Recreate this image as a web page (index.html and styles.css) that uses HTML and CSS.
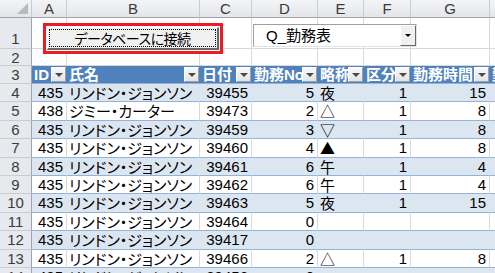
FILE: index.html
```html
<!DOCTYPE html>
<html lang="ja">
<head>
  <meta charset="UTF-8" />
  <title>勤務表 - Excel</title>
  <link rel="stylesheet" href="styles.css">
</head>
<body>
  <div class="sheet">
    <div class="row colhead">
      <div class="corner"><span class="corner-tri"></span></div>
      <div class="ch">A</div>
      <div class="ch">B</div>
      <div class="ch">C</div>
      <div class="ch">D</div>
      <div class="ch">E</div>
      <div class="ch">F</div>
      <div class="ch">G</div>
      <div class="ch"></div>
    </div>

    <div class="row r1">
      <div class="rh">1</div>
      <div class="c"></div><div class="c"></div><div class="c"></div><div class="c"></div>
      <div class="c"></div><div class="c"></div><div class="c"></div><div class="c"></div>
    </div>

    <div class="row r2">
      <div class="rh">2</div>
      <div class="c"></div><div class="c"></div><div class="c"></div><div class="c"></div>
      <div class="c"></div><div class="c"></div><div class="c"></div><div class="c"></div>
    </div>

    <div class="row r3">
      <div class="rh">3</div>
      <div class="th"><span class="th-text">ID</span><span class="filter"></span></div>
      <div class="th"><span class="th-text">氏名</span><span class="filter"></span></div>
      <div class="th"><span class="th-text">日付</span><span class="filter"></span></div>
      <div class="th"><span class="th-text">勤務No</span><span class="filter"></span></div>
      <div class="th"><span class="th-text">略称</span><span class="filter"></span></div>
      <div class="th"><span class="th-text">区分</span><span class="filter"></span></div>
      <div class="th"><span class="th-text">勤務時間</span><span class="filter"></span></div>
      <div class="th"><span class="th-text">勤務</span></div>
    </div>

    <div class="row data band">
      <div class="rh">4</div>
      <div class="c num">435</div><div class="c txt">リンドン・ジョンソン</div><div class="c num">39455</div>
      <div class="c num">5</div><div class="c txt">夜</div><div class="c num">1</div><div class="c num">15</div><div class="c"></div>
    </div>
    <div class="row data">
      <div class="rh">5</div>
      <div class="c num">438</div><div class="c txt">ジミー・カーター</div><div class="c num">39473</div>
      <div class="c num">2</div><div class="c txt">△</div><div class="c num">1</div><div class="c num">8</div><div class="c"></div>
    </div>
    <div class="row data band">
      <div class="rh">6</div>
      <div class="c num">435</div><div class="c txt">リンドン・ジョンソン</div><div class="c num">39459</div>
      <div class="c num">3</div><div class="c txt">▽</div><div class="c num">1</div><div class="c num">8</div><div class="c"></div>
    </div>
    <div class="row data">
      <div class="rh">7</div>
      <div class="c num">435</div><div class="c txt">リンドン・ジョンソン</div><div class="c num">39460</div>
      <div class="c num">4</div><div class="c txt">▲</div><div class="c num">1</div><div class="c num">8</div><div class="c"></div>
    </div>
    <div class="row data band">
      <div class="rh">8</div>
      <div class="c num">435</div><div class="c txt">リンドン・ジョンソン</div><div class="c num">39461</div>
      <div class="c num">6</div><div class="c txt">午</div><div class="c num">1</div><div class="c num">4</div><div class="c"></div>
    </div>
    <div class="row data">
      <div class="rh">9</div>
      <div class="c num">435</div><div class="c txt">リンドン・ジョンソン</div><div class="c num">39462</div>
      <div class="c num">6</div><div class="c txt">午</div><div class="c num">1</div><div class="c num">4</div><div class="c"></div>
    </div>
    <div class="row data band">
      <div class="rh">10</div>
      <div class="c num">435</div><div class="c txt">リンドン・ジョンソン</div><div class="c num">39463</div>
      <div class="c num">5</div><div class="c txt">夜</div><div class="c num">1</div><div class="c num">15</div><div class="c"></div>
    </div>
    <div class="row data">
      <div class="rh">11</div>
      <div class="c num">435</div><div class="c txt">リンドン・ジョンソン</div><div class="c num">39464</div>
      <div class="c num">0</div><div class="c txt"></div><div class="c num"></div><div class="c num"></div><div class="c"></div>
    </div>
    <div class="row data band">
      <div class="rh">12</div>
      <div class="c num">435</div><div class="c txt">リンドン・ジョンソン</div><div class="c num">39417</div>
      <div class="c num">0</div><div class="c txt"></div><div class="c num"></div><div class="c num"></div><div class="c"></div>
    </div>
    <div class="row data">
      <div class="rh">13</div>
      <div class="c num">435</div><div class="c txt">リンドン・ジョンソン</div><div class="c num">39466</div>
      <div class="c num">2</div><div class="c txt">△</div><div class="c num">1</div><div class="c num">8</div><div class="c"></div>
    </div>
    <div class="row data band">
      <div class="rh">14</div>
      <div class="c num">435</div><div class="c txt">リンドン・ジョンソン</div><div class="c num">39456</div>
      <div class="c num">0</div><div class="c txt"></div><div class="c num"></div><div class="c num"></div><div class="c"></div>
    </div>

    <!-- form controls floating over the cells -->
    <div class="btn-ring">
      <div class="btn-connect"><span class="focus">データベースに接続</span></div>
    </div>

    <div class="combo">
      <span class="combo-text">Q_勤務表</span>
      <span class="combo-arrow"></span>
    </div>
  </div>
</body>
</html>
```

FILE: styles.css
```css
body {
  margin: 0;
  background: #fff;
  overflow: hidden;
  font-family: "Liberation Sans", "Noto Sans CJK JP", sans-serif;
  font-size: 15px;
  color: #000;
}

.sheet {
  position: relative;
  width: 495px;
  height: 273px;
  overflow: hidden;
}

.row {
  display: grid;
  grid-template-columns: 32px 35px 133px 52px 66px 46px 47px 79px 40px;
}

.row > div {
  box-sizing: border-box;
  overflow: hidden;
  white-space: nowrap;
}

/* column letters */
.colhead {
  height: 18px;
}

.corner,
.ch {
  background: linear-gradient(#f3f4f6, #e3e6ea);
  border-right: 1px solid #c9cdd2;
  border-bottom: 1px solid #9fa4aa;
}

.corner {
  position: relative;
}

.corner-tri {
  position: absolute;
  right: 3px;
  bottom: 3px;
  width: 0;
  height: 0;
  border-left: 11px solid transparent;
  border-bottom: 11px solid #b6bbc1;
}

.ch {
  text-align: center;
  line-height: 18px;
  color: #3b3b3b;
}

/* row numbers */
.rh {
  background: #e6e9ed;
  border-right: 1px solid #9fa4aa;
  border-bottom: 1px solid #c9cdd2;
  text-align: center;
  color: #3b3b3b;
}

.r1 { height: 31px; }
.r2 { height: 17px; }
.r3 { height: 18px; }

.r1 .rh { line-height: 42px; }
.r2 .rh { line-height: 17px; }
.r3 .rh { line-height: 18px; }

.r1 .c,
.r2 .c {
  border-right: 1px solid #d9d9d9;
  border-bottom: 1px solid #d9d9d9;
}

/* table header */
.th {
  display: flex;
  align-items: center;
  background: #4f81bd;
  color: #fff;
  font-weight: bold;
  border-bottom: 1px solid #95b3d7;
}

.th-text {
  flex: 1;
  min-width: 0;
  overflow: hidden;
  padding-left: 2px;
  line-height: 17px;
}

.filter {
  position: relative;
  flex: none;
  width: 15px;
  height: 15px;
  margin-right: 1px;
  box-sizing: border-box;
  background: linear-gradient(#f8f8f8, #e4e4e4);
  border: 1px solid #fff;
  border-right-color: #a0a0a0;
  border-bottom-color: #a0a0a0;
}

.filter::after {
  content: "";
  position: absolute;
  left: 3px;
  top: 5px;
  border-left: 4px solid transparent;
  border-right: 4px solid transparent;
  border-top: 4px solid #4a4a4a;
}

/* data rows */
.data {
  height: 18.4px;
}

.data .rh {
  line-height: 18px;
}

.data .c {
  line-height: 18px;
  border-bottom: 1px solid #95b3d7;
  border-right: 1px solid #d9d9d9;
}

.data.band .c {
  background: #dce6f1;
  border-right-color: #dce6f1;
}

.num {
  text-align: right;
  padding-right: 3px;
}

.txt {
  padding-left: 2px;
  font-family: "Noto Sans CJK JP", sans-serif;
  font-feature-settings: "palt";
}

/* command button with selection ring */
.btn-ring {
  position: absolute;
  left: 43px;
  top: 23px;
  width: 180px;
  height: 31px;
  box-sizing: border-box;
  border: 3px solid #ed1c24;
  padding: 1px;
  background: #fff;
}

.btn-connect {
  box-sizing: border-box;
  height: 100%;
  background: #f0f0f0;
  border: 1px solid #fff;
  border-right: 2px solid #696969;
  border-bottom: 2px solid #696969;
  padding: 1px;
}

.focus {
  display: block;
  height: 100%;
  box-sizing: border-box;
  border: 1px dotted #000;
  text-align: center;
  line-height: 17px;
  font-family: "Noto Sans CJK JP", sans-serif;
  font-size: 14px;
  letter-spacing: -0.5px;
  font-feature-settings: "palt";
}

/* combo box */
.combo {
  position: absolute;
  left: 253px;
  top: 24px;
  width: 164px;
  height: 23px;
  box-sizing: border-box;
  display: flex;
  background: #fff;
  border: 1px solid #a0a0a0;
  border-right-color: #e3e3e3;
  border-bottom-color: #e3e3e3;
}

.combo-text {
  flex: 1;
  padding-left: 12px;
  line-height: 21px;
}

.combo-arrow {
  position: relative;
  width: 16px;
  box-sizing: border-box;
  background: #f0f0f0;
  border: 1px solid #fff;
  border-right-color: #696969;
  border-bottom-color: #696969;
}

.combo-arrow::after {
  content: "";
  position: absolute;
  left: 4px;
  top: 8px;
  border-left: 3px solid transparent;
  border-right: 3px solid transparent;
  border-top: 3px solid #000;
}
```
